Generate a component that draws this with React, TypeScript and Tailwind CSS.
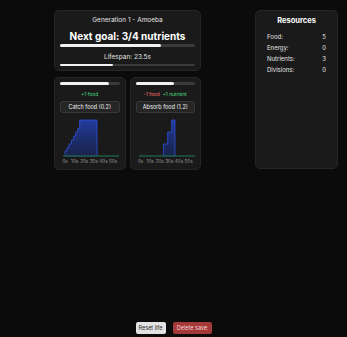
const LABELS = ["0s", "10s", "20s", "30s", "40s", "50s"];

type Action = {
  progress: number;
  effects: { text: string; color: string }[];
  label: string;
  area: string;
};

const ACTIONS: Action[] = [
  {
    progress: 83,
    effects: [{ text: "+1 food", color: "text-[#4ade80]" }],
    label: "Catch food (0.2)",
    area: "M2,37 L2,32 L4,32 L4,28.7 L6,28.7 L6,25 L8.5,25 L8.5,21 L10.7,21 L10.7,17 L12.7,17 L12.7,13 L14.7,13 L14.7,9.7 L16.7,9.7 L16.7,1 L34,1 L34,37 Z",
  },
  {
    progress: 64,
    effects: [
      { text: "-1 food", color: "text-[#f87171]" },
      { text: "+1 nutrient", color: "text-[#4ade80]" },
    ],
    label: "Absorb food (1.2)",
    area: "M24.4,37 L24.4,25 L28.7,25 L28.7,13 L32.7,13 L32.7,1 L36,1 L36,37 Z",
  },
];

const RESOURCES = [
  ["Food:", "5"],
  ["Energy:", "0"],
  ["Nutrients:", "3"],
  ["Divisions:", "0"],
];

function Bar({ value, className }: { value: number; className: string }) {
  return (
    <div className={`w-full rounded-full bg-[#3a3a3a] ${className}`}>
      <div className="h-full rounded-full bg-[#f2f2f2]" style={{ width: `${value}%` }} />
    </div>
  );
}

function Chart({ area, id }: { area: string; id: string }) {
  return (
    <div className="mt-[6px] flex flex-col">
      <svg width="56" height="40" viewBox="0 0 56 40" className="ml-[3px]">
        <defs>
          <linearGradient id={id} x1="0" y1="0" x2="0" y2="1">
            <stop offset="0%" stopColor="#2443b5" stopOpacity="0.85" />
            <stop offset="100%" stopColor="#17286a" stopOpacity="0.6" />
          </linearGradient>
        </defs>
        <path d={area} fill={`url(#${id})`} stroke="#2f52e0" strokeWidth="0.8" />
        <line x1="0" y1="37" x2="56" y2="37" stroke="#1f5a45" strokeWidth="1.6" />
      </svg>
      <div className="flex text-[4.6px] leading-[6px] text-[#9a9a9a]">
        {LABELS.map((l) => (
          <span key={l} className="w-[9.6px] text-center">
            {l}
          </span>
        ))}
      </div>
    </div>
  );
}

export default function App() {
  return (
    <div
      className="flex min-h-[337px] flex-col bg-[#0b0b0b] text-white"
      style={{ fontFamily: "Inter, 'Noto Sans', sans-serif" }}
    >
      <div className="flex items-start pl-[54px] pt-[10px]">
        <div className="flex w-[147px] flex-col gap-[6px]">
          <div className="flex flex-col items-center rounded-[5px] border border-[#262626] bg-[#1a1a1a] px-[5px] pb-[4px] pt-[5px]">
            <div className="text-[6.5px] leading-[9px] text-[#e5e5e5]">Generation 1 - Amoeba</div>
            <div className="mt-[5px] text-[10px] font-bold leading-[12px]">Next goal: 3/4 nutrients</div>
            <Bar value={75} className="mt-[2px] h-[2.5px]" />
            <div className="mt-[6px] text-[6.5px] leading-[9px] text-[#e5e5e5]">Lifespan: 23.5s</div>
            <Bar value={39} className="mt-[2px] h-[2.5px]" />
          </div>
          <div className="flex gap-[4px]">
            {ACTIONS.map((a, i) => (
              <div
                key={a.label}
                className="flex h-[93px] flex-1 flex-col items-center rounded-[5px] border border-[#262626] bg-[#1a1a1a] px-[5px] pt-[4px]"
              >
                <Bar value={a.progress} className="h-[3px]" />
                <div className="mt-[6px] flex gap-[3px] text-[4.8px] leading-[7px]">
                  {a.effects.map((e) => (
                    <span key={e.text} className={e.color}>
                      {e.text}
                    </span>
                  ))}
                </div>
                <div className="mt-[3px] flex h-[12px] w-full items-center justify-center rounded-[3px] border border-[#383838] bg-[#262626] text-[5.5px] text-[#f0f0f0]">
                  {a.label}
                </div>
                <Chart area={a.area} id={`g${i}`} />
              </div>
            ))}
          </div>
        </div>
        <div className="ml-[54px] flex h-[159px] w-[83px] flex-col rounded-[5px] border border-[#262626] bg-[#1a1a1a] px-[11px] pt-[5px]">
          <div className="text-center text-[7.5px] font-bold leading-[10px]">Resources</div>
          <div className="mt-[5px] flex flex-col">
            {RESOURCES.map(([k, v]) => (
              <div key={k} className="flex h-[11px] items-center justify-between text-[6px] text-[#e5e5e5]">
                <span>{k}</span>
                <span>{v}</span>
              </div>
            ))}
          </div>
        </div>
      </div>
      <div className="mt-auto flex justify-center gap-[7px] pb-[3px]">
        <button className="h-[12px] w-[30px] rounded-[2px] bg-[#e2e2e2] text-[5.5px] text-[#2a2a2a]">Reset life</button>
        <button className="h-[12px] w-[39px] rounded-[2px] bg-[#a53838] text-[5.5px] text-[#f3d6d6]">Delete save</button>
      </div>
    </div>
  );
}
